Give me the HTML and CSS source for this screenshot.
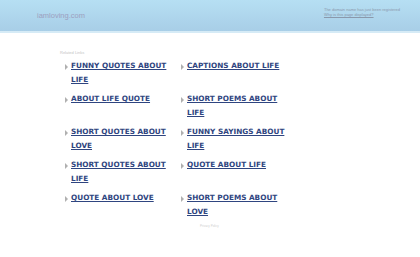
FILE: index.html
```html
<!DOCTYPE html>
<html>
<head>
  <title>iamloving.com</title>
  <meta charset="UTF-8">
  <link rel="stylesheet" href="styles.css">
</head>
<body>
  <div class="header">
    <div class="header-inner">
      <div class="domain">iamloving.com</div>
      <div class="notice">
        <p>The domain name has just been registered</p>
        <a href="#">Why is this page displayed?</a>
      </div>
    </div>
  </div>

  <div class="content">
    <div class="related-title">Related Links</div>
    <ul class="links">
      <li><a href="#">Funny Quotes About Life</a></li>
      <li><a href="#">Captions About Life</a></li>
      <li><a href="#">About Life Quote</a></li>
      <li><a href="#">Short Poems About Life</a></li>
      <li><a href="#">Short Quotes About Love</a></li>
      <li><a href="#">Funny Sayings About Life</a></li>
      <li><a href="#">Short Quotes About Life</a></li>
      <li><a href="#">Quote About Life</a></li>
      <li><a href="#">Quote About Love</a></li>
      <li><a href="#">Short Poems About Love</a></li>
    </ul>
    <div class="privacy">Privacy Policy</div>
  </div>
</body>
</html>
```

FILE: styles.css
```css
body {
  margin: 0;
  font-family: "DejaVu Sans", Verdana, sans-serif;
  background-color: #fff;
}
.header {
  height: 31px;
  background: linear-gradient(#b6dff3, #a8cee7);
  border-bottom: 2px solid #d6ebf6;
}
.header-inner {
  display: flex;
  justify-content: space-between;
  padding: 0 20px 0 37px;
}
.domain {
  margin-top: 11px;
  font-size: 7.5px;
  color: #9c9fc0;
  font-family: "Liberation Sans", Arial, sans-serif;
}
.notice {
  margin-top: 7px;
  font-family: "Liberation Sans", Arial, sans-serif;
  font-size: 4px;
  line-height: 5px;
  color: #8a98ab;
}
.notice p {
  margin: 0;
}
.notice a {
  color: #8a98ab;
}
.content {
  padding: 17px 0 0 60px;
}
.related-title {
  font-family: "Liberation Sans", Arial, sans-serif;
  font-size: 4px;
  color: #c4c4c4;
  margin-bottom: 4px;
}
.links {
  list-style: none;
  margin: 0;
  padding: 0 0 0 5px;
  display: grid;
  grid-template-columns: 116px 116px;
  grid-auto-rows: 33px;
}
.links li {
  display: flex;
  align-items: flex-start;
  width: 112px;
}
.links li::before {
  content: "";
  flex: none;
  width: 0;
  height: 0;
  margin: 5px 3px 0 0;
  border-left: 3px solid #b0b0b0;
  border-top: 3px solid transparent;
  border-bottom: 3px solid transparent;
}
.links a {
  font-size: 7.3px;
  font-weight: bold;
  line-height: 14px;
  text-transform: uppercase;
  color: #2f4580;
}
.privacy {
  font-family: "Liberation Sans", Arial, sans-serif;
  font-size: 3px;
  color: #d0d0d0;
  margin: 0 0 0 140px;
}
```
